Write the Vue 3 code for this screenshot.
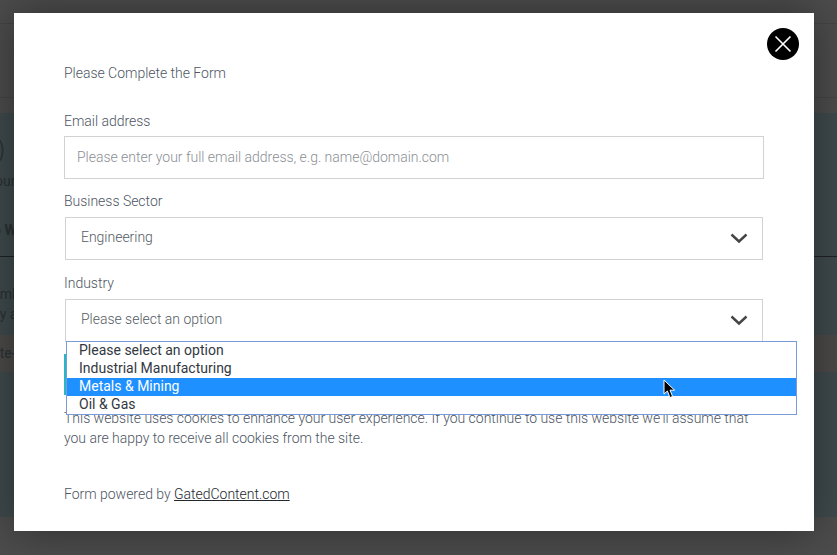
<script setup>
const options = ['Please select an option', 'Industrial Manufacturing', 'Metals & Mining', 'Oil & Gas']
</script>

<template>
  <div class="screen">
    <div class="page" aria-hidden="true">
      <div class="band top"></div>
      <div class="band nav"></div>
      <div class="band sub"></div>
      <section class="hero">
        <div class="paren">(0)</div>
        <div class="hero-text">Your</div>
        <div class="hero-strong">Who We</div>
        <div class="rule"></div>
        <div class="hero-body">Member</div>
        <div class="hero-body second">Any at</div>
      </section>
      <div class="stripe">Site-</div>
      <div class="lower"></div>
      <div class="foot"></div>
    </div>

    <div class="modal">
      <button class="close" aria-label="Close">
        <svg width="20" height="20" viewBox="0 0 20 20">
          <path d="M2.5 2.5 17.5 17.5M17.5 2.5 2.5 17.5" stroke="#fff" stroke-width="1.6" fill="none" />
        </svg>
      </button>

      <p class="title">Please Complete the Form</p>

      <label class="label first">Email address</label>
      <div class="input placeholder">Please enter your full email address, e.g. name@domain.com</div>

      <label class="label sector">Business Sector</label>
      <div class="select">
        <span>Engineering</span>
        <svg class="chevron" width="18" height="11" viewBox="0 0 18 11">
          <path d="M1.5 1.5 9 8.5 16.5 1.5" stroke="#444" stroke-width="2.4" fill="none" />
        </svg>
      </div>

      <label class="label industry">Industry</label>
      <div class="select-wrap">
        <div class="select">
          <span>Please select an option</span>
          <svg class="chevron" width="18" height="11" viewBox="0 0 18 11">
            <path d="M1.5 1.5 9 8.5 16.5 1.5" stroke="#444" stroke-width="2.4" fill="none" />
          </svg>
        </div>
        <ul class="dropdown">
          <li v-for="(option, i) in options" :key="option" :class="{ active: i === 2 }">{{ option }}</li>
        </ul>
        <svg class="cursor" width="13" height="20" viewBox="0 0 13 20">
          <path d="M1 1V15L4.4 12 6.9 18.5 9.6 17.4 7 11.2H11.6Z" fill="#000" stroke="#fff" stroke-width="1" />
        </svg>
      </div>

      <div class="notice"></div>

      <p class="cookies">This website uses cookies to enhance your user experience. If you continue to use this website we'll assume that you are happy to receive all cookies from the site.</p>

      <p class="powered">Form powered by <a class="link">GatedContent.com</a></p>
    </div>
  </div>
</template>

<style scoped>
.screen {
  position: relative;
  width: 837px;
  height: 555px;
  overflow: hidden;
  background: #4c4c4c;
  font-family: Roboto, "Liberation Sans", sans-serif;
}

.page {
  display: flex;
  flex-direction: column;
  height: 100%;
}
.band { background: #4c4c4c; }
.top { height: 23px; border-bottom: 1px solid #444; }
.nav { height: 73px; border-bottom: 1px solid #444; }
.sub { height: 15px; }
.hero {
  height: 222px;
  background: #3f4a4c;
  color: #2a3133;
  overflow: hidden;
}
.paren { margin: 18px 0 0 -26px; font-size: 26px; line-height: 36px; font-weight: 300; }
.hero-text { margin: 2px 0 0 -13px; font-size: 14px; line-height: 24px; }
.hero-strong { margin: 27px 0 0 -27px; font-size: 14px; line-height: 20px; font-weight: 700; white-space: nowrap; }
.rule { margin-top: 16px; height: 1px; background: #1e2325; }
.hero-body { margin: 27px 0 0 -20px; font-size: 14px; line-height: 20px; white-space: nowrap; }
.hero-body.second { margin: 0 0 0 -17px; }
.stripe {
  height: 37px;
  background: #4b4a49;
  color: #2a3133;
  font-size: 14px;
  line-height: 36px;
  text-indent: -12px;
}
.lower { height: 145px; background: #3f4a4c; }
.foot { flex: 1; background: #4c4c4c; }

.modal {
  position: absolute;
  left: 14px;
  top: 13px;
  box-sizing: border-box;
  width: 800px;
  height: 518px;
  padding: 0 50px;
  background: #fff;
  color: #4d5563;
  font-size: 14px;
  font-weight: 300;
  line-height: 20px;
  letter-spacing: -0.02px;
  box-shadow: 0 0 40px rgba(0, 0, 0, 0.4);
}

.close {
  position: absolute;
  top: 15px;
  right: 15px;
  display: flex;
  align-items: center;
  justify-content: center;
  width: 32px;
  height: 32px;
  padding: 0;
  border: 0;
  border-radius: 50%;
  background: #000;
}

.title { margin: 0; padding-top: 50px; }

.label { display: block; }
.label.first { margin-top: 28px; }
.label.sector { margin-top: 12px; }
.label.industry { margin-top: 13px; }

.input {
  box-sizing: border-box;
  height: 43px;
  margin-top: 5px;
  padding: 0 12px;
  border: 1px solid #d2d2d2;
  line-height: 41px;
}
.placeholder { color: #8b8f95; }

.select {
  box-sizing: border-box;
  display: flex;
  align-items: center;
  justify-content: space-between;
  height: 43px;
  margin: 6px 1px 0;
  padding: 0 14px 0 15px;
  border: 1px solid #d2d2d2;
  color: #555b63;
}
.select span { margin-bottom: 4px; }
.chevron { flex: none; }

.select-wrap { position: relative; }
.dropdown {
  position: absolute;
  z-index: 2;
  left: 2px;
  top: 42px;
  box-sizing: border-box;
  width: 731px;
  height: 74px;
  margin: 0;
  padding: 0;
  border: 1px solid #7b9bd8;
  background: #fff;
  list-style: none;
  color: #33383f;
  font-weight: 400;
  line-height: 16px;
  letter-spacing: 0;
}
.dropdown li { height: 18px; padding-left: 12px; }
.dropdown li.active { background: #1e90ff; color: #fff; }
.cursor {
  position: absolute;
  z-index: 3;
  left: 599px;
  top: 80px;
}

.notice {
  height: 41px;
  margin-top: 12px;
  border-left: 3px solid #2ab5c6;
}

.cookies { width: 700px; margin: 13px 0 0; }
.powered { margin: 36px 0 0; }
.link { color: #23272e; text-decoration: underline; }
</style>

<style>
html, body { margin: 0; background: #4c4c4c; }
</style>
